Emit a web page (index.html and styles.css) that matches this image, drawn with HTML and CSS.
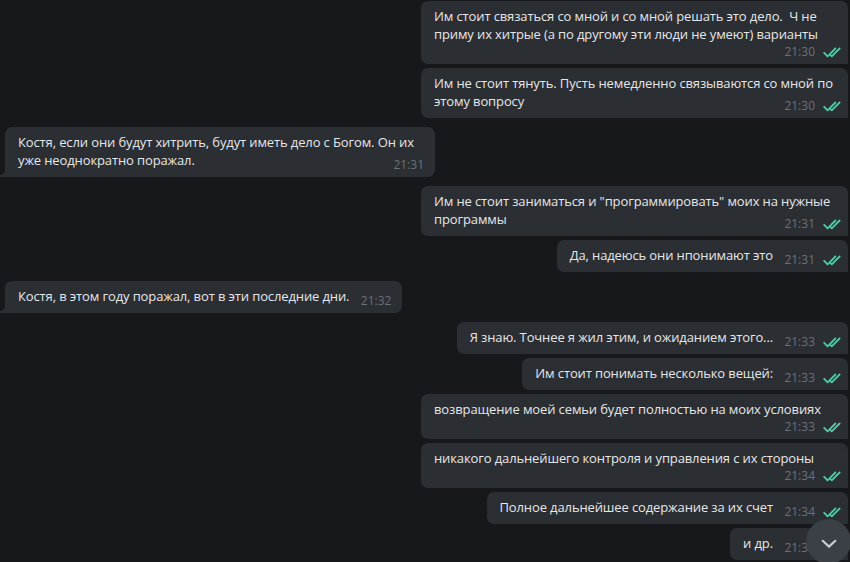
FILE: index.html
```html
<!DOCTYPE html>
<html lang="ru">
<head>
<meta charset="utf-8">
<title>Chat</title>
<link rel="stylesheet" href="styles.css">
</head>
<body>
<div class="chat">
  <div class="row out">
    <div class="bubble stack wide">
      <div class="text">Им стоит связаться со мной и со мной решать это дело.&nbsp; Ч не<br>приму их хитрые (а по другому эти люди не умеют) варианты</div>
      <div class="meta"><span class="time">21:30</span><svg class="check" viewBox="0 0 20 11"><path d="M1.2 5.8 L4.6 9.3 L12.4 1.5 M7.8 8.3 L8.8 9.3 L16.6 1.5"/></svg></div>
    </div>
  </div>
  <div class="row out">
    <div class="bubble wide">
      <div class="text">Им не стоит тянуть. Пусть немедленно связываются со мной по<br>этому вопросу<span class="spacer"></span></div>
      <div class="meta"><span class="time">21:30</span><svg class="check" viewBox="0 0 20 11"><path d="M1.2 5.8 L4.6 9.3 L12.4 1.5 M7.8 8.3 L8.8 9.3 L16.6 1.5"/></svg></div>
    </div>
  </div>
  <div class="row in">
    <div class="bubble wide">
      <div class="text">Костя, если они будут хитрить, будут иметь дело с Богом. Он их<br>уже неоднократно поражал.<span class="spacer"></span></div>
      <div class="meta"><span class="time">21:31</span></div>
    </div>
  </div>
  <div class="row out">
    <div class="bubble wide">
      <div class="text">Им не стоит заниматься и "программировать" моих на нужные<br>программы<span class="spacer"></span></div>
      <div class="meta"><span class="time">21:31</span><svg class="check" viewBox="0 0 20 11"><path d="M1.2 5.8 L4.6 9.3 L12.4 1.5 M7.8 8.3 L8.8 9.3 L16.6 1.5"/></svg></div>
    </div>
  </div>
  <div class="row out">
    <div class="bubble">
      <div class="text">Да, надеюсь они нпонимают это<span class="spacer"></span></div>
      <div class="meta"><span class="time">21:31</span><svg class="check" viewBox="0 0 20 11"><path d="M1.2 5.8 L4.6 9.3 L12.4 1.5 M7.8 8.3 L8.8 9.3 L16.6 1.5"/></svg></div>
    </div>
  </div>
  <div class="row in">
    <div class="bubble">
      <div class="text">Костя, в этом году поражал, вот в эти последние дни.<span class="spacer"></span></div>
      <div class="meta"><span class="time">21:32</span></div>
    </div>
  </div>
  <div class="row out">
    <div class="bubble">
      <div class="text">Я знаю. Точнее я жил этим, и ожиданием этого...<span class="spacer"></span></div>
      <div class="meta"><span class="time">21:33</span><svg class="check" viewBox="0 0 20 11"><path d="M1.2 5.8 L4.6 9.3 L12.4 1.5 M7.8 8.3 L8.8 9.3 L16.6 1.5"/></svg></div>
    </div>
  </div>
  <div class="row out">
    <div class="bubble">
      <div class="text">Им стоит понимать несколько вещей:<span class="spacer"></span></div>
      <div class="meta"><span class="time">21:33</span><svg class="check" viewBox="0 0 20 11"><path d="M1.2 5.8 L4.6 9.3 L12.4 1.5 M7.8 8.3 L8.8 9.3 L16.6 1.5"/></svg></div>
    </div>
  </div>
  <div class="row out">
    <div class="bubble stack wide">
      <div class="text">возвращение моей семьи будет полностью на моих условиях</div>
      <div class="meta"><span class="time">21:33</span><svg class="check" viewBox="0 0 20 11"><path d="M1.2 5.8 L4.6 9.3 L12.4 1.5 M7.8 8.3 L8.8 9.3 L16.6 1.5"/></svg></div>
    </div>
  </div>
  <div class="row out">
    <div class="bubble stack wide">
      <div class="text">никакого дальнейшего контроля и управления с их стороны</div>
      <div class="meta"><span class="time">21:34</span><svg class="check" viewBox="0 0 20 11"><path d="M1.2 5.8 L4.6 9.3 L12.4 1.5 M7.8 8.3 L8.8 9.3 L16.6 1.5"/></svg></div>
    </div>
  </div>
  <div class="row out">
    <div class="bubble">
      <div class="text">Полное дальнейшее содержание за их счет<span class="spacer"></span></div>
      <div class="meta"><span class="time">21:34</span><svg class="check" viewBox="0 0 20 11"><path d="M1.2 5.8 L4.6 9.3 L12.4 1.5 M7.8 8.3 L8.8 9.3 L16.6 1.5"/></svg></div>
    </div>
  </div>
  <div class="row out">
    <div class="bubble">
      <div class="text">и др.<span class="spacer"></span></div>
      <div class="meta"><span class="time">21:35</span><svg class="check" viewBox="0 0 20 11"><path d="M1.2 5.8 L4.6 9.3 L12.4 1.5 M7.8 8.3 L8.8 9.3 L16.6 1.5"/></svg></div>
    </div>
  </div>
  <button class="scroll-down" aria-label="Вниз"><svg viewBox="0 0 20 12"><path d="M3 3 L10 9.5 L17 3"/></svg></button>
</div>
</body>
</html>
```

FILE: styles.css
```css
* { box-sizing: border-box; }

html, body {
  margin: 0;
  padding: 0;
  background: #17181c;
}

body {
  width: 850px;
  height: 562px;
  overflow: hidden;
  font-family: "Open Sans", "Noto Sans", sans-serif;
  font-size: 13px;
  color: #e6e7e9;
}

.chat {
  position: relative;
  display: flex;
  flex-direction: column;
  height: 562px;
  padding: 1px 2px 0 0;
}

.row {
  display: flex;
}

.row.out { justify-content: flex-end; }
.row.in { justify-content: flex-start; padding-left: 5px; }

.out + .out, .in + .in { margin-top: 4px; }
.out + .in, .in + .out { margin-top: 9px; }

.bubble {
  position: relative;
  display: grid;
  background: #2b2e33;
  border-radius: 7px;
  padding: 6px 5px 4px 13px;
  flex-shrink: 0;
}

.row.out .bubble { border-bottom-right-radius: 0; }
.row.in .bubble {
  border-bottom-left-radius: 0;
  padding-right: 11px;
}

.row.in .bubble::before {
  content: "";
  position: absolute;
  left: -6px;
  bottom: 0;
  width: 6px;
  height: 8px;
  background: radial-gradient(circle at 0 0, transparent 6px, #2b2e33 6.6px);
}

.bubble.wide { width: 427px; }
.row.in .bubble.wide { width: 430px; }

.text {
  grid-area: 1 / 1;
  line-height: 18px;
  white-space: nowrap;
  letter-spacing: -0.12px;
  padding-bottom: 4px;
}

.spacer {
  display: inline-block;
  width: 70px;
  height: 1px;
}

.row.in .spacer { width: 42px; }

.meta {
  grid-area: 1 / 1;
  justify-self: end;
  align-self: end;
  display: flex;
  align-items: center;
  height: 16px;
}

.bubble.stack {
  display: flex;
  flex-direction: column;
}

.bubble.stack .text { padding-bottom: 0; }
.bubble.stack .meta { align-self: flex-end; margin-top: 1px; }

.time {
  font-size: 12px;
  line-height: 16px;
  color: #6a7179;
}

.check {
  width: 20px;
  height: 11px;
  margin-left: 8px;
  margin-right: 0;
  fill: none;
  stroke: #55c8a8;
  stroke-width: 1.8;
  stroke-linecap: round;
  stroke-linejoin: round;
}

.scroll-down {
  position: absolute;
  left: 806px;
  top: 519px;
  width: 45px;
  height: 45px;
  border-radius: 50%;
  border: none;
  padding: 0;
  background: #3b4047;
  display: flex;
  align-items: center;
  justify-content: center;
  cursor: pointer;
}

.scroll-down svg {
  width: 18px;
  height: 11px;
  margin-top: 3px;
  fill: none;
  stroke: #c9ccd0;
  stroke-width: 2.4;
  stroke-linecap: round;
  stroke-linejoin: round;
}
```
